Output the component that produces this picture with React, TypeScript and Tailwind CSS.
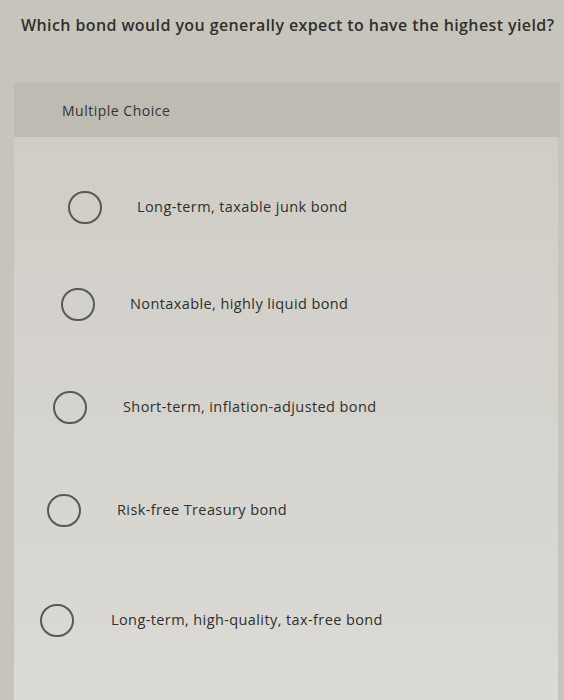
import React from "react";

const options = [
  { text: "Long-term, taxable junk bond", row: "h-[96px] pl-[54px]", gap: "gap-[35px]" },
  { text: "Nontaxable, highly liquid bond", row: "h-[98px] pl-[47px]", gap: "gap-[35px]" },
  { text: "Short-term, inflation-adjusted bond", row: "h-[108px] pl-[39px]", gap: "gap-[36px]" },
  { text: "Risk-free Treasury bond", row: "h-[98px] pl-[33px]", gap: "gap-[36px]" },
  { text: "Long-term, high-quality, tax-free bond", row: "h-[122px] pl-[26px]", gap: "gap-[37px]" },
];

export default function App() {
  return (
    <div
      className="w-[564px] h-[700px] overflow-hidden bg-[#c7c4bc] text-[#2e2e2c]"
      style={{ fontFamily: "'Open Sans', Lato, sans-serif" }}
    >
      <div className="pt-[14px] pl-[21px] text-[16px] font-semibold leading-[22px] tracking-[0.4px] whitespace-nowrap text-[#30302e]">
        Which bond would you generally expect to have the highest yield?
      </div>
      <div className="mt-[47px] ml-[14px] mr-[4px] h-[54px] bg-[#bebbb2] flex items-center pl-[48px] text-[14px] tracking-[0.5px] font-medium text-[#333331]">
        Multiple Choice
      </div>
      <div className="ml-[14px] mr-[6px] pt-[22px] bg-gradient-to-b from-[#cfcdc6] via-[#d6d4ce] to-[#dddbd5] h-[600px]">
        {options.map((o, i) => (
          <div key={i} className={`flex items-center ${o.row} ${o.gap}`}>
            <div className="w-[34px] h-[33px] rounded-full border-2 border-[#585856] shrink-0" />
            <div className="text-[14.5px] tracking-[0.4px] font-medium text-[#2f2f2d] whitespace-nowrap">{o.text}</div>
          </div>
        ))}
      </div>
    </div>
  );
}
